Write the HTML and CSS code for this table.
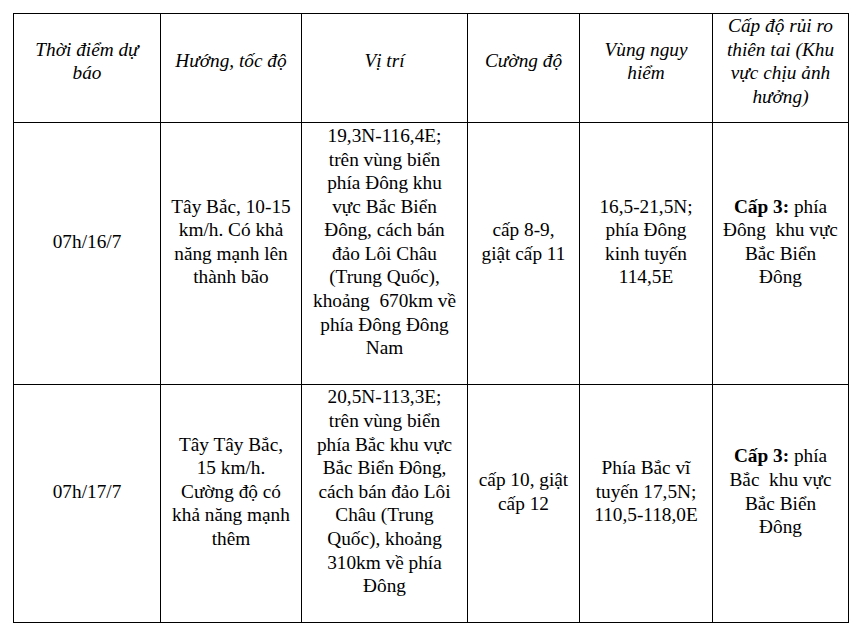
FILE: index.html
```
<!DOCTYPE html>
<html lang="vi">
<head>
<meta charset="utf-8">
<title>Dự báo</title>
<link rel="stylesheet" href="styles.css">
</head>
<body>
<div class="page">
<table class="forecast">
  <colgroup>
    <col class="c1"><col class="c2"><col class="c3"><col class="c4"><col class="c5"><col class="c6">
  </colgroup>
  <thead>
    <tr class="head">
      <th>Thời điểm dự<br>báo</th>
      <th>Hướng, tốc độ</th>
      <th>Vị trí</th>
      <th>Cường độ</th>
      <th>Vùng nguy<br>hiểm</th>
      <th>Cấp độ rủi ro<br>thiên tai (Khu<br>vực chịu ảnh<br>hưởng)</th>
    </tr>
  </thead>
  <tbody>
    <tr class="r1">
      <td>07h/16/7</td>
      <td>Tây Bắc, 10-15<br>km/h. Có khả<br>năng mạnh lên<br>thành bão</td>
      <td>19,3N-116,4E;<br>trên vùng biển<br>phía Đông khu<br>vực Bắc Biển<br>Đông, cách bán<br>đảo Lôi Châu<br>(Trung Quốc),<br>khoảng&nbsp; 670km về<br>phía Đông Đông<br>Nam</td>
      <td>cấp 8-9,<br>giật cấp 11</td>
      <td>16,5-21,5N;<br>phía Đông<br>kinh tuyến<br>114,5E</td>
      <td><b>Cấp 3:</b> phía<br>Đông&nbsp; khu vực<br>Bắc Biển<br>Đông</td>
    </tr>
    <tr class="r2">
      <td>07h/17/7</td>
      <td>Tây Tây Bắc,<br>15 km/h.<br>Cường độ có<br>khả năng mạnh<br>thêm</td>
      <td>20,5N-113,3E;<br>trên vùng biển<br>phía Bắc khu vực<br>Bắc Biển Đông,<br>cách bán đảo Lôi<br>Châu (Trung<br>Quốc), khoảng<br>310km về phía<br>Đông</td>
      <td>cấp 10, giật<br>cấp 12</td>
      <td>Phía Bắc vĩ<br>tuyến 17,5N;<br>110,5-118,0E</td>
      <td><b>Cấp 3:</b> phía<br>Bắc&nbsp; khu vực<br>Bắc Biển<br>Đông</td>
    </tr>
  </tbody>
</table>
</div>
</body>
</html>
```
FILE: styles.css
```
html, body {
  margin: 0;
  padding: 0;
  background: #fff;
}
.page {
  padding: 13px 0 0 13px;
}
.forecast {
  border-collapse: collapse;
  table-layout: fixed;
  width: 835px;
  font-family: "Liberation Serif", "Times New Roman", serif;
  font-size: 19.3px;
  line-height: 23.6px;
  color: #000;
}
.c1 { width: 147px; }
.c2 { width: 141px; }
.c3 { width: 166px; }
.c4 { width: 112px; }
.c5 { width: 133px; }
.c6 { width: 136px; }
.forecast th,
.forecast td {
  border: 1px solid #000;
  text-align: center;
  vertical-align: middle;
  padding: 0 2px 24px;
  white-space: nowrap;
}
.forecast th {
  font-weight: normal;
  font-style: italic;
  padding: 0 2px 14px;
}
.head { height: 109px; }
.r1 { height: 262px; }
.r2 { height: 236px; }
```
